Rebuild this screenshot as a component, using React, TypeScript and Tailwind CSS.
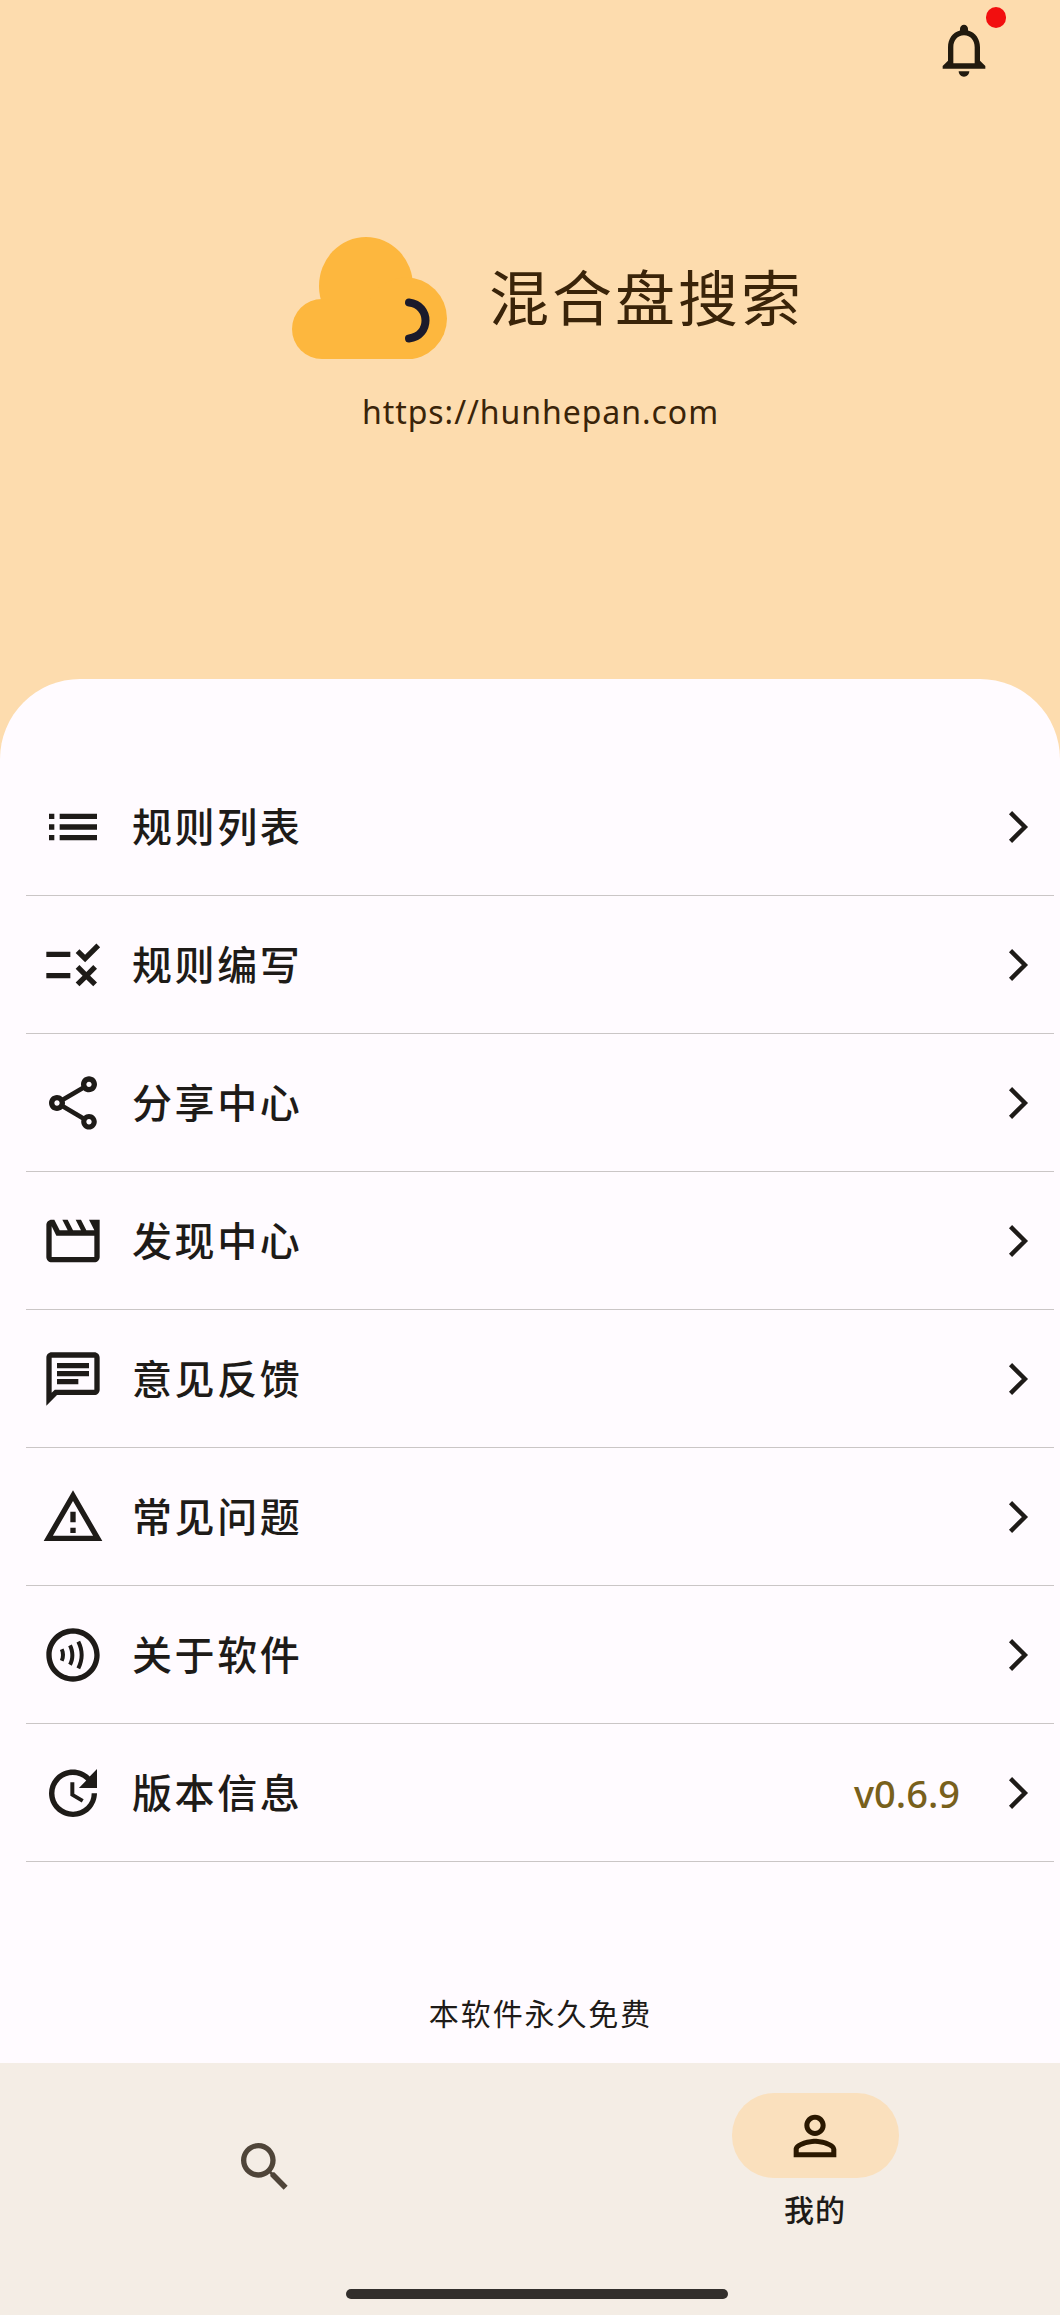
const ICONS: Record<string, string> = {
  list: 'M3 13h2v-2H3v2zm0 4h2v-2H3v2zm0-8h2V7H3v2zm4 4h14v-2H7v2zm0 4h14v-2H7v2zM7 7v2h14V7H7z',
  rule: 'M16.54 11L13 7.46l1.41-1.41 2.12 2.12 4.24-4.24 1.41 1.41L16.54 11zM11 7H2v2h9V7zm10 6.41L19.59 12 17 14.59 14.41 12 13 13.41 15.59 16 13 18.59 14.41 20 17 17.41 19.59 20 21 18.59 18.41 16 21 13.41zM11 15H2v2h9v-2z',
  share: 'M18 16.08c-.76 0-1.44.3-1.96.77L8.91 12.7c.05-.23.09-.46.09-.7s-.04-.47-.09-.7l7.05-4.11c.54.5 1.25.81 2.04.81 1.66 0 3-1.34 3-3s-1.34-3-3-3-3 1.34-3 3c0 .24.04.47.09.7L8.04 9.81C7.5 9.31 6.79 9 6 9c-1.66 0-3 1.34-3 3s1.34 3 3 3c.79 0 1.5-.31 2.04-.81l7.12 4.16c-.05.21-.08.43-.08.65 0 1.61 1.31 2.92 2.92 2.92 1.61 0 2.92-1.31 2.92-2.92s-1.31-2.92-2.92-2.92zM18 4c.55 0 1 .45 1 1s-.45 1-1 1-1-.45-1-1 .45-1 1-1zM6 13c-.55 0-1-.45-1-1s.45-1 1-1 1 .45 1 1-.45 1-1 1zm12 7.02c-.55 0-1-.45-1-1s.45-1 1-1 1 .45 1 1-.45 1-1 1z',
  movie: 'M4 6.47L5.76 10H20v8H4V6.47M22 4h-4l2 4h-3l-2-4h-2l2 4h-3l-2-4H8l2 4H7L5 4H4c-1.1 0-1.99.9-1.99 2L2 18c0 1.1.9 2 2 2h16c1.1 0 2-.9 2-2V4z',
  chat: 'M4 4h16v12H5.17L4 17.17V4m0-2c-1.1 0-1.99.9-1.99 2L2 22l4-4h14c1.1 0 2-.9 2-2V4c0-1.1-.9-2-2-2H4zm2 10h8v2H6v-2zm0-3h12v2H6V9zm0-3h12v2H6V6z',
  warning: 'M12 5.99L19.53 19H4.47L12 5.99M12 2L1 21h22L12 2zm1 14h-2v2h2v-2zm0-6h-2v4h2v-4z',
  contactless: 'M12 2C6.48 2 2 6.48 2 12s4.48 10 10 10 10-4.48 10-10S17.52 2 12 2zm0 18c-4.41 0-8-3.59-8-8s3.59-8 8-8 8 3.59 8 8-3.59 8-8 8zM8.46 14.45l-1.36-.62c.28-.61.41-1.24.4-1.86-.01-.63-.14-1.24-.4-1.8l1.36-.63c.35.75.53 1.56.54 2.4.01.86-.17 1.7-.54 2.51zm3.07 1.56l-1.3-.74c.52-.92.78-1.98.78-3.15 0-1.19-.27-2.33-.8-3.4l1.34-.67c.64 1.28.96 2.65.96 4.07 0 1.43-.33 2.74-.98 3.89zm3.14 1.32l-1.35-.66c.78-1.6 1.18-3.18 1.18-4.69 0-1.51-.4-3.07-1.18-4.64l1.34-.67c.9 1.78 1.34 3.56 1.34 5.31 0 1.74-.44 3.54-1.33 5.35z',
  update: 'M21 10.12h-6.78l2.74-2.82c-2.73-2.7-7.15-2.8-9.88-.1-2.73 2.71-2.73 7.08 0 9.79s7.15 2.71 9.88 0C18.32 15.65 19 14.08 19 12.1h2c0 1.98-.88 4.55-2.64 6.29-3.51 3.48-9.21 3.48-12.72 0-3.5-3.47-3.53-9.11-.02-12.58s9.14-3.47 12.65 0L21 3v7.12zM12.5 8v4.25l3.5 2.08-.72 1.21L11 13V8h1.5z',
  bell: 'M12 22c1.1 0 2-.9 2-2h-4c0 1.1.9 2 2 2zm6-6v-5c0-3.07-1.63-5.64-4.5-6.32V4c0-.83-.67-1.5-1.5-1.5s-1.5.67-1.5 1.5v.68C7.64 5.36 6 7.92 6 11v5l-2 2v1h16v-1l-2-2zm-2 1H8v-6c0-2.48 1.51-4.5 4-4.5s4 2.02 4 4.5v6z',
  search: 'M15.5 14h-.79l-.28-.27C15.41 12.59 16 11.11 16 9.5 16 5.91 13.09 3 9.5 3S3 5.91 3 9.5 5.91 16 9.5 16c1.61 0 3.09-.59 4.23-1.57l.27.28v.79l5 4.99L20.49 19l-4.99-5zm-6 0C7.01 14 5 11.99 5 9.5S7.01 5 9.5 5 14 7.01 14 9.5 11.99 14 9.5 14z',
  person: 'M12 5.9c1.16 0 2.1.94 2.1 2.1s-.94 2.1-2.1 2.1S9.9 9.16 9.9 8s.94-2.1 2.1-2.1m0 9c2.97 0 6.1 1.46 6.1 2.1v1.1H5.9V17c0-.64 3.13-2.1 6.1-2.1M12 4C9.79 4 8 5.79 8 8s1.79 4 4 4 4-1.79 4-4-1.79-4-4-4zm0 9c-2.67 0-8 1.34-8 4v3h16v-3c0-2.66-5.33-4-8-4z',
};

function Icon({ name, className }: { name: string; className?: string }) {
  return (
    <svg viewBox="0 0 24 24" fill="currentColor" className={`w-16 h-16 shrink-0 ${className ?? ''}`}>
      <path d={ICONS[name]} />
    </svg>
  );
}

// Thinner than the stock material chevron
function Chevron({ className }: { className?: string }) {
  return (
    <svg viewBox="0 0 24 24" fill="none" stroke="currentColor" strokeWidth="1.65" className={`w-16 h-16 shrink-0 ${className ?? ''}`}>
      <path d="M9.2 6.6 14.6 12 9.2 17.4" />
    </svg>
  );
}

// Cloud logo with the small dark arc on its right side
function Logo() {
  return (
    <svg viewBox="292 237 155 122" className="w-[155px] h-[122px] shrink-0">
      <g fill="#fdb73e">
        <ellipse cx="366" cy="286" rx="47" ry="49" />
        <circle cx="322" cy="329" r="30" />
        <circle cx="406" cy="318.5" r="41" />
        <rect x="322" y="300" width="85" height="59" />
      </g>
      <path d="M409 302.5C431 305 431 336 409 338.5" fill="none" stroke="#1b1a2b" strokeWidth="8" strokeLinecap="round" />
    </svg>
  );
}

const ROWS = [
  { icon: 'list', label: '规则列表' },
  { icon: 'rule', label: '规则编写' },
  { icon: 'share', label: '分享中心' },
  { icon: 'movie', label: '发现中心' },
  { icon: 'chat', label: '意见反馈' },
  { icon: 'warning', label: '常见问题' },
  { icon: 'contactless', label: '关于软件' },
  { icon: 'update', label: '版本信息', value: 'v0.6.9' },
];

export default function App() {
  return (
    <div className="w-[1060px] h-[2315px] flex flex-col overflow-hidden bg-[#fddcae] font-['Noto_Sans','Noto_Sans_CJK_SC',sans-serif]">
      {/* Header */}
      <div className="h-[679px] shrink-0 pt-[18px] text-[#3a2409]">
        <div className="flex justify-end pr-[64px] h-[64px]">
          <div className="relative w-16 h-16">
            <Icon name="bell" className="text-[#211a0e]" />
            <span className="absolute top-[-11px] left-[54px] w-5 h-[21px] rounded-full bg-[#f20f0f]" />
          </div>
        </div>
        <div className="flex items-center pl-[292px] mt-[155px]">
          <Logo />
          <span className="ml-[42px] text-[60px] leading-[80px] tracking-[3px]">混合盘搜索</span>
        </div>
        <div className="mt-[31px] pl-[21px] text-center text-[32px] leading-[44px] tracking-[0.95px]">https://hunhepan.com</div>
      </div>

      {/* Menu card */}
      <div className="flex-1 flex flex-col bg-[#fffbff] rounded-t-[80px] pt-[79px]">
        {ROWS.map(row => (
          <div key={row.label} className="h-[138px] ml-[26px] mr-[6px] pl-[15px] pr-[4px] flex items-center border-b border-[#cac6c6] text-[#1e1b18]">
            <Icon name={row.icon} />
            <span className="ml-[27px] text-[40px] font-medium tracking-[2.6px] leading-[56px]">{row.label}</span>
            {row.value && <span className="ml-auto text-[38px] font-medium leading-[52px] text-[#78601c]">{row.value}</span>}
            <Chevron className={row.value ? 'ml-[26px]' : 'ml-auto'} />
          </div>
        ))}
        <div className="mt-[130px] pl-[21px] text-center text-[30px] leading-[44px] tracking-[1.9px] text-[#1e1b18]">本软件永久免费</div>
      </div>

      {/* Bottom nav */}
      <div className="h-[252px] shrink-0 bg-[#f4ede5]">
        <div className="h-[226px] grid grid-cols-[530px_1fr]">
          <div className="flex justify-center pt-[72px]">
            <Icon name="search" className="text-[#4f4539]" />
          </div>
          <div className="flex flex-col items-center pl-[40px] pt-[30px]">
            <div className="w-[167px] h-[85px] rounded-[42px] bg-[#fae0bd] flex items-center justify-center">
              <Icon name="person" className="text-[#2a1800]" />
            </div>
            <span className="mt-[11px] text-[30px] font-medium leading-[42px] tracking-[1px] text-[#1e1b18]">我的</span>
          </div>
        </div>
        <div className="ml-[346px] w-[382px] h-[10px] rounded-full bg-[#322f2c]" />
      </div>
    </div>
  );
}
